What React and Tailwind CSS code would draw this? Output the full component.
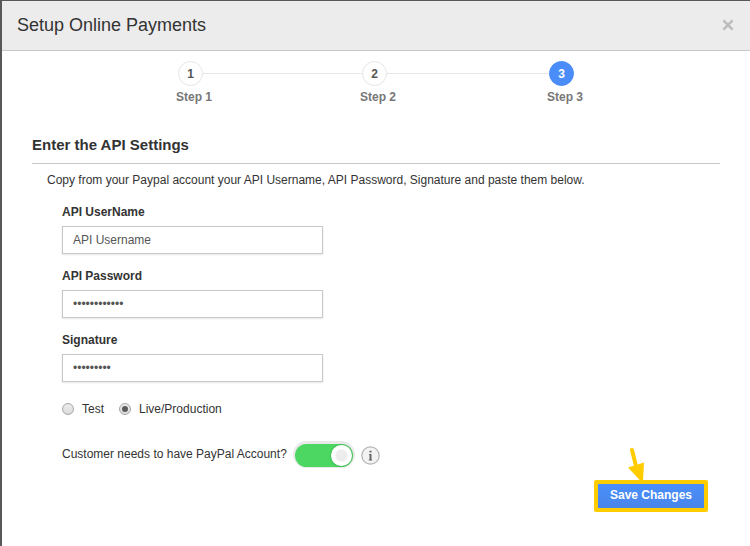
import React, { useState } from 'react';

const fields = [
  { id: 'api-username', label: 'API UserName', type: 'text', value: 'API Username' },
  { id: 'api-password', label: 'API Password', type: 'password', value: 'apipassword1' },
  { id: 'signature', label: 'Signature', type: 'password', value: 'signature' },
];

function Step({ number, active, last }) {
  return (
    <li>
      <div className="flex items-center -mr-0.5 pl-0.5">
        <span
          className={`flex h-[25px] w-[25px] shrink-0 items-center justify-center rounded-full border text-xs font-bold ${
            active ? 'border-[#4a8df8] bg-[#4a8df8] text-white' : 'border-[#e6e6e6] bg-white text-[#555]'
          }`}
        >
          {number}
        </span>
        {!last && <span className="h-px flex-1 bg-[#e6e6e6]" />}
      </div>
      <p className="mt-[3px] whitespace-nowrap text-xs font-bold leading-4 text-[#777]">Step {number}</p>
    </li>
  );
}

function ModeRadio({ value, label, mode, setMode }) {
  return (
    <label className="flex items-center gap-2">
      <input
        type="radio"
        name="mode"
        value={value}
        checked={mode === value}
        onChange={() => setMode(value)}
        className="flex h-3 w-3 appearance-none items-center justify-center rounded-full border border-[#a6a6a6] bg-linear-to-b from-[#ececec] to-[#dcdcdc] before:h-1.5 before:w-1.5 before:rounded-full checked:before:bg-[#5c5c5c]"
      />
      {label}
    </label>
  );
}

export default function App() {
  const [values, setValues] = useState(Object.fromEntries(fields.map((f) => [f.id, f.value])));
  const [mode, setMode] = useState('live');
  const [needsAccount, setNeedsAccount] = useState(true);

  return (
    <div className="min-h-screen border-l-2 border-t border-[#58585a] bg-white font-['Liberation_Sans',Arial,sans-serif] text-xs text-[#333]">
      {/* Header */}
      <header className="flex h-[50px] items-center justify-between border-b border-[#c8c8c8] bg-[#ececec] pb-0.5 pl-[15px] pr-4">
        <h1 className="text-lg leading-6">Setup Online Payments</h1>
        <button type="button" aria-label="Close" className="flex h-3 w-3 items-center justify-center text-[#bbb]">
          <svg viewBox="0 0 12 12" className="h-3 w-3" stroke="currentColor" strokeWidth="2.4">
            <path d="M1.4 1.4 10.6 10.6M10.6 1.4 1.4 10.6" />
          </svg>
        </button>
      </header>

      {/* Steps */}
      <ol className="grid grid-cols-[184fr_187fr_auto] pl-[174px] pr-[167px] pt-2.5">
        <Step number={1} />
        <Step number={2} />
        <Step number={3} active last />
      </ol>

      <form className="px-[30px]" onSubmit={(e) => e.preventDefault()}>
        <h2 className="mt-[30px] border-b border-[#c8c8c8] pb-2 text-[15px] font-bold leading-5">
          Enter the API Settings
        </h2>
        <p className="mt-2 pl-[15px] leading-4">
          Copy from your Paypal account your API Username, API Password, Signature and paste them below.
        </p>

        <div className="pl-[30px] pt-4">
          {fields.map((f) => (
            <div key={f.id} className="mb-[14px]">
              <label htmlFor={f.id} className="block font-bold leading-4">
                {f.label}
              </label>
              <input
                id={f.id}
                type={f.type}
                value={values[f.id]}
                onChange={(e) => setValues({ ...values, [f.id]: e.target.value })}
                className="mt-1.5 block h-7 w-full max-w-[261px] border border-[#c8c8c8] bg-white px-2.5 text-xs text-[#555] shadow-[0_1px_2px_#0000001a] outline-none"
              />
            </div>
          ))}

          {/* Account mode */}
          <div className="mt-[19px] flex gap-[15px] leading-4">
            <ModeRadio value="test" label="Test" mode={mode} setMode={setMode} />
            <ModeRadio value="live" label="Live/Production" mode={mode} setMode={setMode} />
          </div>

          {/* PayPal account switch */}
          <div className="mt-[27px] flex items-center">
            <label htmlFor="needs-account" className="pb-[3px] leading-4">
              Customer needs to have PayPal Account?
            </label>
            <input
              id="needs-account"
              type="checkbox"
              role="switch"
              checked={needsAccount}
              onChange={() => setNeedsAccount(!needsAccount)}
              className="ml-2 flex h-[23px] w-[58px] appearance-none items-center rounded-full bg-[#ddd] px-px shadow-[0_-1px_0_2px_#e9e9e9] before:h-[21px] before:w-[21px] before:rounded-full before:bg-[radial-gradient(circle,#eeeeee_0,#ebebeb_5px,#fff_7px)] before:shadow-[0_0_2px_#00000060] checked:justify-end checked:bg-[#4cd763]"
            />
            <button type="button" aria-label="More information" className="ml-2 h-[19px] w-[19px]">
              <svg viewBox="0 0 19 19" className="h-[19px] w-[19px]">
                <circle cx="9.5" cy="9.5" r="8.7" fill="#f3f3f3" stroke="#b5b5b5" strokeWidth="1.3" />
                <path d="M8.5 4.8h2v1.8h-2zM8 8h2.5v5.6h.7v.9H7.8v-.9h.7V8.9H8z" fill="#666" />
              </svg>
            </button>
          </div>
        </div>

        {/* Save, with the pointer arrow above it */}
        <div className="mt-[13px] flex justify-end pr-3">
          <div className="relative">
            <button
              type="submit"
              className="block h-8 rounded-xs border-4 border-[#fc0] bg-linear-to-b from-[#4a8ffb] to-[#4885ea] px-3 pb-0.5 text-xs font-bold text-white"
            >
              Save Changes
            </button>
            <svg viewBox="0 0 20 36" className="pointer-events-none absolute -top-[33px] left-[33px] h-9 w-5" aria-hidden="true">
              <path d="M5 3 9 19" stroke="#fc0" strokeWidth="4" strokeLinecap="round" />
              <path d="M1 20.5 17 15.5 16 34.5H14z" fill="#fc0" />
            </svg>
          </div>
        </div>
      </form>
    </div>
  );
}
